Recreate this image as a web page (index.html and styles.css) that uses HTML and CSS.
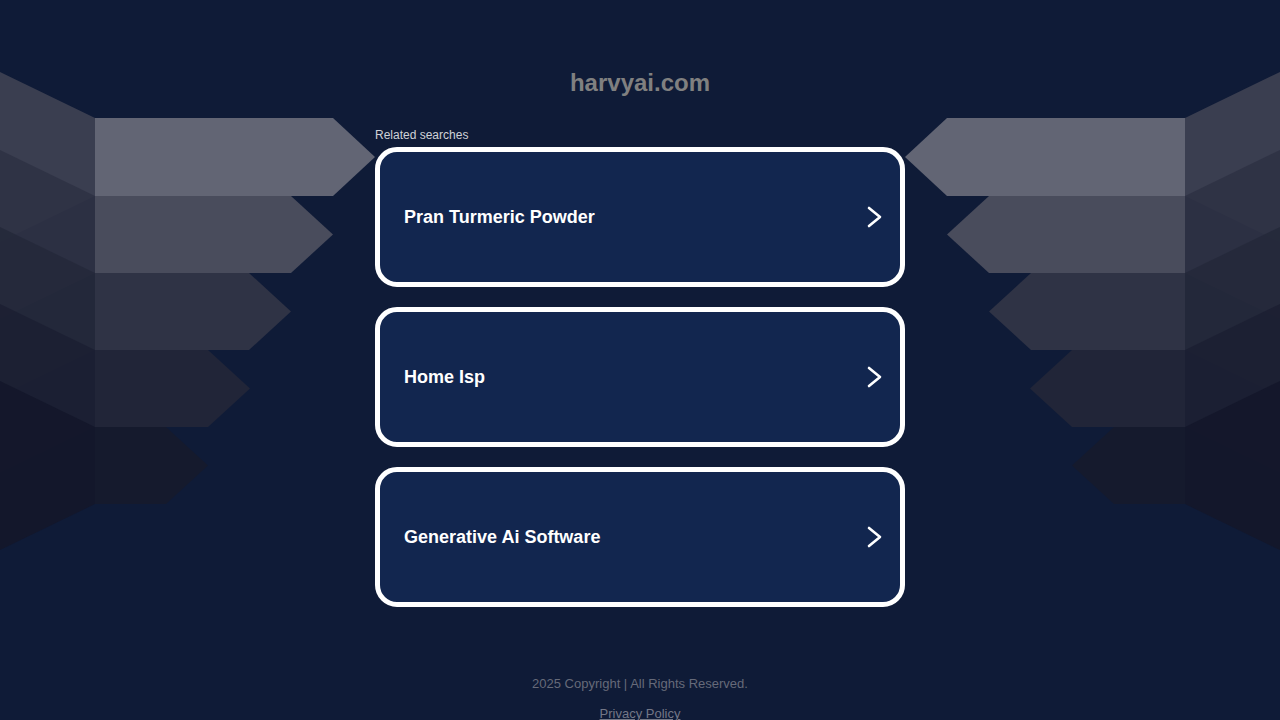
FILE: index.html
```html
<!DOCTYPE html>
<html lang="en">
<head>
<meta charset="utf-8">
<title>harvyai.com</title>
<link rel="stylesheet" href="styles.css">
</head>
<body>
<div class="page">
  <div class="wing">
    <svg class="wing-art" width="375" height="720" viewBox="0 0 375 720">
      <polygon class="col c1" points="0,72 95,118 95,196 0,242"/>
      <polygon class="col c2" points="0,150 95,196 95,273 0,319"/>
      <polygon class="col c3" points="0,227 95,273 95,350 0,396"/>
      <polygon class="col c4" points="0,304 95,350 95,427 0,473"/>
      <polygon class="col c5" points="0,381 95,427 95,504 0,550"/>
      <polygon class="a1" points="95,118 333,118 375,157 333,196 95,196"/>
      <polygon class="a2" points="95,196 291,196 333,234.5 291,273 95,273"/>
      <polygon class="a3" points="95,273 249,273 291,311.5 249,350 95,350"/>
      <polygon class="a4" points="95,350 208,350 250,388.5 208,427 95,427"/>
      <polygon class="a5" points="95,427 166,427 208,465.5 166,504 95,504"/>
    </svg>
  </div>
  <main class="main">
    <h1 class="title">harvyai.com</h1>
    <div class="related">Related searches</div>
    <div class="cards">
      <a class="card" href="#"><span class="card-text">Pran Turmeric Powder</span><svg class="chev" width="16" height="22" viewBox="0 0 16 22"><polyline points="2,2 13,11 2,20"/></svg></a>
      <a class="card" href="#"><span class="card-text">Home Isp</span><svg class="chev" width="16" height="22" viewBox="0 0 16 22"><polyline points="2,2 13,11 2,20"/></svg></a>
      <a class="card" href="#"><span class="card-text">Generative Ai Software</span><svg class="chev" width="16" height="22" viewBox="0 0 16 22"><polyline points="2,2 13,11 2,20"/></svg></a>
    </div>
    <footer class="footer">
      <div class="copy">2025 Copyright | All Rights Reserved.</div>
      <a class="privacy" href="#">Privacy Policy</a>
    </footer>
  </main>
  <div class="wing wing-right">
    <svg class="wing-art" width="375" height="720" viewBox="0 0 375 720">
      <polygon class="col c1" points="0,72 95,118 95,196 0,242"/>
      <polygon class="col c2" points="0,150 95,196 95,273 0,319"/>
      <polygon class="col c3" points="0,227 95,273 95,350 0,396"/>
      <polygon class="col c4" points="0,304 95,350 95,427 0,473"/>
      <polygon class="col c5" points="0,381 95,427 95,504 0,550"/>
      <polygon class="a1" points="95,118 333,118 375,157 333,196 95,196"/>
      <polygon class="a2" points="95,196 291,196 333,234.5 291,273 95,273"/>
      <polygon class="a3" points="95,273 249,273 291,311.5 249,350 95,350"/>
      <polygon class="a4" points="95,350 208,350 250,388.5 208,427 95,427"/>
      <polygon class="a5" points="95,427 166,427 208,465.5 166,504 95,504"/>
    </svg>
  </div>
</div>
</body>
</html>
```

FILE: styles.css
```css
html, body {
  margin: 0;
  padding: 0;
  background: #0f1b37;
  font-family: "Liberation Sans", Arial, sans-serif;
}

.page {
  display: flex;
  width: 1280px;
  height: 720px;
  overflow: hidden;
}

.wing {
  width: 375px;
  flex-shrink: 0;
}

.wing-art {
  display: block;
}

.wing-right .wing-art {
  transform: scaleX(-1);
}

.a1 { fill: #626574; }
.a2 { fill: #494c5c; }
.a3 { fill: #2f3345; }
.a4 { fill: #212538; }
.a5 { fill: #151a2d; }

.col { opacity: 0.92; }
.c1 { fill: #3e4153; }
.c2 { fill: #2f3244; }
.c3 { fill: #25293b; }
.c4 { fill: #1c2033; }
.c5 { fill: #13172a; }

.main {
  width: 530px;
  flex-shrink: 0;
  display: flex;
  flex-direction: column;
  padding-top: 69px;
}

.title {
  margin: 0;
  font-size: 24px;
  line-height: 28px;
  font-weight: bold;
  color: #808080;
  text-align: center;
}

.related {
  margin-top: 31px;
  font-size: 12px;
  line-height: 14px;
  color: #cfd2d8;
}

.cards {
  margin-top: 5px;
  display: flex;
  flex-direction: column;
  gap: 20px;
}

.card {
  box-sizing: border-box;
  height: 140px;
  border: 5px solid #ffffff;
  border-radius: 22px;
  background: #12264f;
  display: flex;
  align-items: center;
  justify-content: space-between;
  padding: 0 17px 0 24px;
  text-decoration: none;
}

.card-text {
  font-size: 18px;
  font-weight: bold;
  color: #ffffff;
}

.chev polyline {
  fill: none;
  stroke: #ffffff;
  stroke-width: 2.6;
  stroke-linecap: round;
  stroke-linejoin: round;
}

.footer {
  margin-top: 69px;
  display: flex;
  flex-direction: column;
  align-items: center;
  gap: 15px;
}

.copy {
  font-size: 13px;
  line-height: 15px;
  color: #666a79;
}

.privacy {
  font-size: 13px;
  line-height: 15px;
  color: #737786;
  text-decoration: underline;
}
```
